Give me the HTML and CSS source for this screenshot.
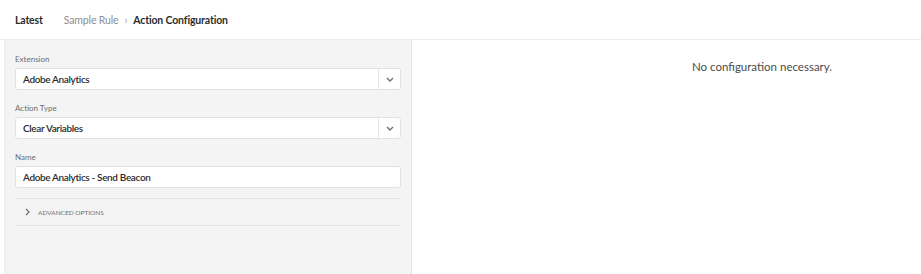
FILE: index.html
```html
<!DOCTYPE html>
<html lang="en">
<head>
    <meta charset="UTF-8">
    <meta name="viewport" content="width=device-width, initial-scale=1.0">
    <title>Action Configuration</title>
    <link rel="stylesheet" href="styles.css">
</head>
<body>
    <div class="header">
        <span class="latest">Latest</span>
        <span class="crumb">Sample Rule</span>
        <span class="sep">&rsaquo;</span>
        <span class="current">Action Configuration</span>
    </div>
    <div class="main">
        <div class="side">
            <div class="field">
                <label class="label">Extension</label>
                <div class="select">
                    <span class="value">Adobe Analytics</span>
                    <span class="arrow">
                        <svg width="8" height="5" viewBox="0 0 8 5"><path d="M1 1 L4 4 L7 1" fill="none" stroke="#6e6e6e" stroke-width="1.4"/></svg>
                    </span>
                </div>
            </div>
            <div class="field">
                <label class="label">Action Type</label>
                <div class="select">
                    <span class="value">Clear Variables</span>
                    <span class="arrow">
                        <svg width="8" height="5" viewBox="0 0 8 5"><path d="M1 1 L4 4 L7 1" fill="none" stroke="#6e6e6e" stroke-width="1.4"/></svg>
                    </span>
                </div>
            </div>
            <div class="field name-field">
                <label class="label">Name</label>
                <div class="textbox">Adobe Analytics - Send Beacon</div>
            </div>
            <div class="advanced">
                <svg width="5" height="8" viewBox="0 0 5 8"><path d="M1 1 L4 4 L1 7" fill="none" stroke="#6e6e6e" stroke-width="1.2"/></svg>
                <span>ADVANCED OPTIONS</span>
            </div>
        </div>
        <div class="content">
            <p class="empty">No configuration necessary.</p>
        </div>
    </div>
</body>
</html>
```

FILE: styles.css
```css
body {
    margin: 0;
    font-family: "Lato", "Open Sans", sans-serif;
    color: #2c2c2c;
    background-color: white;
}

.header {
    height: 40px;
    display: flex;
    align-items: center;
    padding-left: 15px;
    font-size: 10.5px;
    letter-spacing: -0.15px;
    border-bottom: 1px solid #ececec;
    box-sizing: border-box;
}

.latest {
    font-weight: bold;
    margin-right: 21px;
}

.crumb {
    color: #8e8e8e;
}

.sep {
    color: #a0a0a0;
    margin: 0 6px;
}

.current {
    font-weight: bold;
}

.main {
    display: flex;
    height: 234px;
}

.side {
    width: 408px;
    margin-left: 4px;
    background-color: #f4f4f4;
    border-left: 1px solid #ebebeb;
    border-right: 1px solid #e6e6e6;
    padding: 14px 10px 0 10px;
    box-sizing: border-box;
}

.field {
    margin-bottom: 13px;
}

.name-field {
    margin-bottom: 10px;
}

.label {
    display: block;
    font-size: 8px;
    color: #6e6e6e;
    margin-bottom: 4px;
}

.select, .textbox {
    height: 22px;
    background-color: white;
    border: 1px solid #e1e1e1;
    border-radius: 3px;
    display: flex;
    align-items: center;
    font-size: 10px;
    letter-spacing: -0.35px;
    font-weight: 600;
    color: #2c2c2c;
    box-sizing: border-box;
}

.textbox {
    padding-left: 7px;
}

.value {
    flex: 1;
    padding-left: 7px;
}

.arrow {
    width: 21px;
    height: 100%;
    border-left: 1px solid #e6e6e6;
    display: flex;
    align-items: center;
    justify-content: center;
}

.advanced {
    border-top: 1px solid #e3e3e3;
    border-bottom: 1px solid #e3e3e3;
    height: 26px;
    display: flex;
    align-items: center;
    padding-left: 10px;
    font-size: 6.5px;
    color: #6e6e6e;
}

.advanced span {
    margin-left: 8px;
}

.content {
    flex: 1;
}

.empty {
    margin: 20px 0 0 280px;
    font-size: 11.5px;
    color: #4b4b4b;
}
```
